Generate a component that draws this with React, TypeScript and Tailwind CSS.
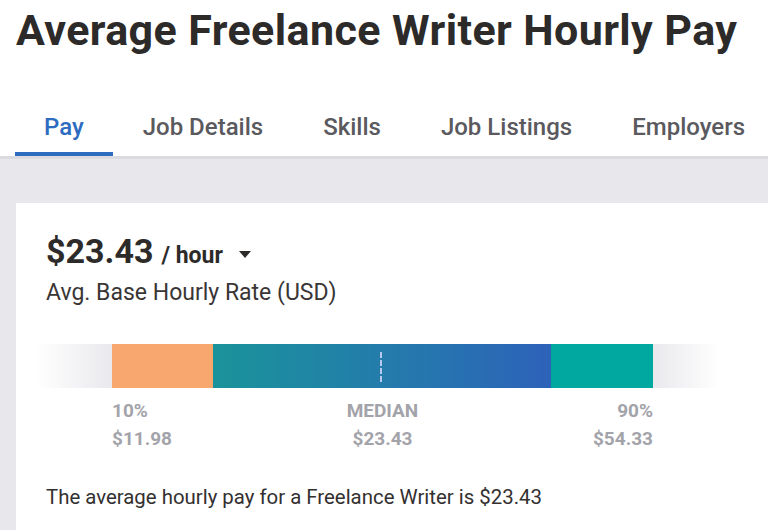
const TABS = ["Pay", "Job Details", "Skills", "Job Listings", "Employers"];

export default function App() {
  return (
    <div
      className="h-[530px] w-[768px] overflow-hidden bg-white"
      style={{ fontFamily: "Roboto, 'Liberation Sans', sans-serif" }}
    >
      <h1 className="whitespace-nowrap pl-[16px] pt-[4px] text-[43px] font-bold leading-[52px] tracking-[0.4px] text-[#2d2a2a]">
        Average Freelance Writer Hourly Pay
      </h1>

      {/* tabs */}
      <div className="mt-[57px] flex border-b-[3px] border-[#dcdce0] pl-[15px]">
        {TABS.map((t, i) => (
          <div
            key={t}
            className={
              i === 0
                ? "shrink-0 whitespace-nowrap border-b-4 border-[#2d6cc0] px-[29px] pb-[11px] text-[24px] font-medium leading-[28px] text-[#2d6cc0]"
                : "shrink-0 whitespace-nowrap px-[30px] pb-[15px] text-[24px] font-medium leading-[28px] text-[#5a5a5e]"
            }
          >
            {t}
          </div>
        ))}
      </div>

      {/* body */}
      <div className="h-full bg-[#e8e8ec] pl-[16px] pt-[44px]">
        <div className="bg-white pl-[30px] pt-[28px]">
          <div className="flex items-baseline text-[#2d2a2a]">
            <span className="text-[34px] font-bold leading-[40px]">$23.43</span>
            <span className="ml-[8px] text-[23px] font-bold">/ hour</span>
            <svg width="14" height="8" viewBox="0 0 14 8" className="ml-[15px] mt-[6px] self-center">
              <path d="M1 0 L13 0 L7 7 Z" fill="#2d2a2a" />
            </svg>
          </div>
          <div className="mt-[5px] text-[23px] leading-[28px] text-[#3a3636]">
            Avg. Base Hourly Rate (USD)
          </div>

          {/* range bar */}
          <div className="-ml-[10px] mt-[37px] flex h-[44px]">
            <div className="w-[76px] bg-gradient-to-r from-white to-[#e9e9ed]" />
            <div className="w-[101px] bg-[#f8a86e]" />
            <div className="relative w-[338px] bg-gradient-to-r from-[#1a939a] to-[#2d62b9]">
              <div className="absolute left-[167px] top-[8px] h-[30px] border-l-2 border-dashed border-[#b6c8ec]" />
            </div>
            <div className="w-[102px] bg-[#00a89f]" />
            <div className="w-[66px] bg-gradient-to-r from-[#e9e9ed] to-white" />
          </div>

          <div className="ml-[66px] mt-[9px] grid w-[541px] grid-cols-3 text-[19px] font-bold leading-[28px] text-[#a3a3aa]">
            <div>
              <div>10%</div>
              <div>$11.98</div>
            </div>
            <div className="text-center">
              <div>MEDIAN</div>
              <div>$23.43</div>
            </div>
            <div className="text-right">
              <div>90%</div>
              <div>$54.33</div>
            </div>
          </div>

          <div className="mt-[32px] pb-[40px] text-[20.4px] leading-[24px] text-[#333030]">
            The average hourly pay for a Freelance Writer is $23.43
          </div>
        </div>
      </div>
    </div>
  );
}
